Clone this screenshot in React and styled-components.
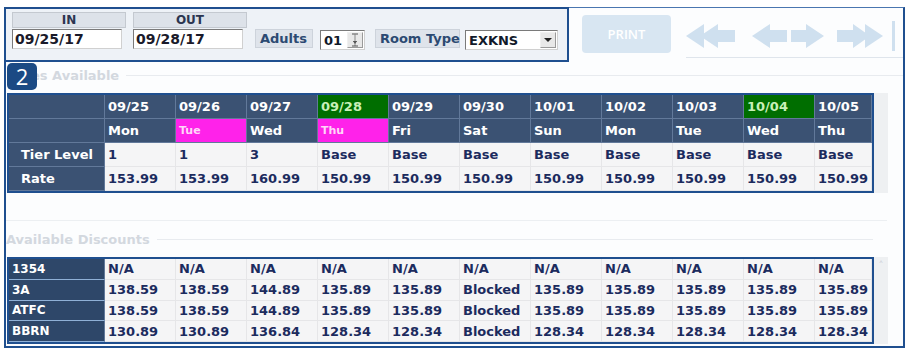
import React from 'react';
import styled, { createGlobalStyle } from 'styled-components';

const Global = createGlobalStyle`
  html, body { margin: 0; padding: 0; background: #ffffff; }
  body { font-family: "DejaVu Sans", Verdana, sans-serif; }
`;

const Page = styled.div`
  width: 907px;
  height: 350px;
  overflow: hidden;
  box-sizing: border-box;
  padding: 7px 0 0 4px;
  background: #ffffff;
`;

const Frame = styled.div`
  width: 901px;
  height: 341px;
  box-sizing: border-box;
  border: 2px solid #1f4f8f;
  border-top: 1px solid #4a76b0;
  background: #fcfdfe;
  display: flex;
  flex-direction: column;
`;

const TopRow = styled.div`
  display: flex;
  height: 54px;
`;

const SearchBox = styled.div`
  margin: -1px 0 0 -2px;
  width: 565px;
  height: 55px;
  flex: none;
  box-sizing: border-box;
  border: 2px solid #1f4f8f;
  background: #eef2f7;
  display: flex;
  align-items: flex-start;
  padding: 3px 0 0 6px;
`;

const DateField = styled.div`
  display: flex;
  flex-direction: column;
  width: 114px;
  margin-left: ${p => p.$ml || 0}px;
`;

const DateLabel = styled.div`
  height: 16px;
  box-sizing: border-box;
  border: 1px solid #c4c9d0;
  background: #dde2e9;
  text-align: center;
  font-weight: bold;
  font-size: 12px;
  line-height: 14px;
  color: #2b3550;
`;

const DateInput = styled.div`
  margin-top: 1px;
  width: 110px;
  height: 20px;
  box-sizing: border-box;
  border: 1px solid #d0d0d0;
  border-top-color: #7a7a7a;
  border-left-color: #7a7a7a;
  background: #ffffff;
  font-weight: bold;
  font-size: 14px;
  line-height: 19px;
  padding-left: 2px;
  color: #1a1a2a;
`;

const FieldLabel = styled.div`
  margin-top: 17px;
  margin-left: ${p => p.$ml}px;
  width: ${p => p.$w}px;
  height: 19px;
  box-sizing: border-box;
  border: 1px solid #cdd3db;
  background: #dfe4eb;
  font-weight: bold;
  font-size: 13px;
  line-height: 17px;
  color: #2c4a72;
  padding-left: 4px;
  white-space: nowrap;
`;

const SelectBox = styled.div`
  margin-top: 18px;
  margin-left: ${p => p.$ml}px;
  width: ${p => p.$w}px;
  height: 20px;
  box-sizing: border-box;
  border: 1px solid #d0d0d0;
  border-top-color: #7a7a7a;
  border-left-color: #7a7a7a;
  background: #ffffff;
  display: flex;
  align-items: center;
  justify-content: space-between;
  padding: 0 1px 0 3px;
  font-weight: bold;
  font-size: 13px;
  color: #111a2a;
`;

const DropButton = styled.div`
  width: 16px;
  height: 16px;
  box-sizing: border-box;
  border: 1px solid #9a9a9a;
  border-top-color: #f0f0f0;
  border-left-color: #f0f0f0;
  background: #e8e8e8;
  display: flex;
  align-items: center;
  justify-content: center;
`;

const NavArea = styled.div`
  flex: 1;
  display: flex;
  align-items: flex-start;
`;

const PrintButton = styled.div`
  margin: 7px 0 0 13px;
  width: 89px;
  height: 38px;
  flex: none;
  border-radius: 4px;
  background: #d8e6f2;
  color: #ffffff;
  font-family: "Open Sans", "Noto Sans", sans-serif;
  font-weight: 600;
  font-size: 13px;
  display: flex;
  align-items: center;
  justify-content: center;
`;

const ArrowStrip = styled.div`
  flex: 1;
  margin-left: 15px;
  height: 50px;
  box-sizing: border-box;
  border-bottom: 1px solid #dfe5ec;
  display: flex;
  align-items: flex-end;
  padding-bottom: 9px;
`;

const ArrowIcon = styled.svg`
  display: block;
  flex: none;
  margin-left: ${p => p.$ml || 0}px;
`;

const Legend = styled.div`
  position: relative;
  height: ${p => p.$h}px;
  display: flex;
  align-items: center;
  gap: 7px;
  padding-bottom: ${p => p.$pb || 0}px;
  box-sizing: border-box;
`;

const LegendText = styled.span`
  font-weight: bold;
  font-size: 13px;
  color: #d3d8df;
  white-space: nowrap;
`;

const LegendLine = styled.div`
  flex: 1;
  height: 1px;
  background: #e8ebef;
  margin-right: ${p => p.$mr || 0}px;
`;

const Badge = styled.div`
  position: absolute;
  left: 1px;
  top: 1px;
  width: 30px;
  height: 27px;
  border-radius: 5px;
  background: #1b4a84;
  color: #ffffff;
  font-family: "Open Sans", "Noto Sans", sans-serif;
  font-size: 22px;
  line-height: 27px;
  text-align: center;
`;

const TableRow = styled.div`
  display: flex;
  margin-left: 1px;
`;

const Grid = styled.div`
  display: grid;
  grid-template-columns: 96px repeat(10, 71px) 57px;
  grid-auto-rows: ${p => p.$row}px;
  border: 2px solid #1f4f8f;
  background: #f4f4f5;
`;

const Gutter = styled.div`
  width: 14px;
  background: #eef0f2;
  color: #d0d4da;
  font-size: 10px;
  text-align: center;
  line-height: 18px;
`;

const Cell = styled.div`
  box-sizing: border-box;
  display: flex;
  align-items: center;
  white-space: nowrap;
  font-weight: bold;
  font-size: ${p => (p.$small ? 11 : p.$fs || 13)}px;
  padding-left: ${p => p.$pl ?? 3}px;
  ${p =>
    p.$kind === 'head'
      ? `
    background: #3b5273;
    color: #ffffff;
    border-right: 1px solid #62799a;
    border-bottom: 1px solid #62799a;
  `
      : p.$kind === 'label'
      ? `
    background: #2e4769;
    color: #ffffff;
    border-right: 1px solid #62799a;
    border-bottom: 1px solid #8fb0d6;
  `
      : `
    background: #f5f5f6;
    color: #1c2b5e;
    border-right: 1px solid #e6e6e8;
    border-bottom: 1px solid #e6e6e8;
  `}
  ${p => p.$hl === 'green' && `background: #006e00; color: #c9f0b8;`}
  ${p => p.$hl === 'pink' && `background: #ff22ea; color: #ffd6f8;`}
`;

const Divider = styled.div`
  height: 28px;
  box-sizing: border-box;
  border-bottom: 1px solid #eceff2;
  margin-right: 16px;
`;

const dates = ['09/25', '09/26', '09/27', '09/28', '09/29', '09/30', '10/01', '10/02', '10/03', '10/04', '10/05'];
const days = ['Mon', 'Tue', 'Wed', 'Thu', 'Fri', 'Sat', 'Sun', 'Mon', 'Tue', 'Wed', 'Thu'];
const greenDates = [3, 9];
const pinkDays = [1, 3];
const tiers = ['1', '1', '3', 'Base', 'Base', 'Base', 'Base', 'Base', 'Base', 'Base', 'Base'];
const rates = ['153.99', '153.99', '160.99', '150.99', '150.99', '150.99', '150.99', '150.99', '150.99', '150.99', '150.99'];

const r3a = ['138.59', '138.59', '144.89', '135.89', '135.89', 'Blocked', '135.89', '135.89', '135.89', '135.89', '135.89'];
const discounts = [
  { code: '1354', vals: Array(11).fill('N/A') },
  { code: '3A', vals: r3a },
  { code: 'ATFC', vals: r3a },
  { code: 'BBRN', vals: ['130.89', '130.89', '136.84', '128.34', '128.34', 'Blocked', '128.34', '128.34', '128.34', '128.34', '128.34'] },
];

const ARROW = '#cfe0ef';

function DoubleLeft() {
  return (
    <ArrowIcon width="50" height="24" viewBox="0 0 50 24">
      <polygon points="0,12 18,0 18,24" fill={ARROW} />
      <polygon points="14,12 32,0 32,6 49,6 49,18 32,18 32,24" fill={ARROW} />
    </ArrowIcon>
  );
}
function LeftArrow({ ml }) {
  return (
    <ArrowIcon $ml={ml} width="36" height="24" viewBox="0 0 36 24">
      <polygon points="0,12 18,0 18,6 35,6 35,18 18,18 18,24" fill={ARROW} />
    </ArrowIcon>
  );
}
function RightArrow({ ml }) {
  return (
    <ArrowIcon $ml={ml} width="33" height="24" viewBox="0 0 33 24">
      <polygon points="0,6 15,6 15,0 33,12 15,24 15,18 0,18" fill={ARROW} />
    </ArrowIcon>
  );
}
function DoubleRight({ ml }) {
  return (
    <ArrowIcon $ml={ml} width="60" height="30" viewBox="0 0 60 30" style={{ marginBottom: -3 }}>
      <polygon points="0,9 16,9 16,3 33,15 16,27 16,21 0,21" fill={ARROW} />
      <polygon points="28,3 46,15 28,27" fill={ARROW} />
      <rect x="55" y="0" width="3" height="30" fill={ARROW} />
    </ArrowIcon>
  );
}

function SpinIcon() {
  return (
    <svg width="10" height="14" viewBox="0 0 10 14">
      <line x1="2" y1="1" x2="8" y2="1" stroke="#555" />
      <polygon points="3,8 7,8 5,11" fill="#222" />
      <line x1="5" y1="1" x2="5" y2="13" stroke="#888" />
      <line x1="2" y1="13" x2="8" y2="13" stroke="#555" />
    </svg>
  );
}
function DropIcon() {
  return (
    <svg width="8" height="5" viewBox="0 0 8 5">
      <polygon points="0,0 8,0 4,4" fill="#222" />
    </svg>
  );
}

export default function App() {
  return (
    <>
      <Global />
      <Page>
        <Frame>
          <TopRow>
            <SearchBox>
              <DateField>
                <DateLabel>IN</DateLabel>
                <DateInput>09/25/17</DateInput>
              </DateField>
              <DateField $ml={7}>
                <DateLabel>OUT</DateLabel>
                <DateInput>09/28/17</DateInput>
              </DateField>
              <FieldLabel $ml={8} $w={58}>Adults</FieldLabel>
              <SelectBox $ml={7} $w={45}>
                <span>01</span>
                <DropButton><SpinIcon /></DropButton>
              </SelectBox>
              <FieldLabel $ml={10} $w={85}>Room Type</FieldLabel>
              <SelectBox $ml={5} $w={93}>
                <span>EXKNS</span>
                <DropButton><DropIcon /></DropButton>
              </SelectBox>
            </SearchBox>
            <NavArea>
              <PrintButton>PRINT</PrintButton>
              <ArrowStrip>
                <DoubleLeft />
                <LeftArrow ml={16} />
                <RightArrow ml={3} />
                <DoubleRight ml={13} />
              </ArrowStrip>
            </NavArea>
          </TopRow>

          <Legend $h={31} $pb={5}>
            <LegendText>Rates Available</LegendText>
            <LegendLine />
            <Badge>2</Badge>
          </Legend>

          <TableRow>
            <Grid $row={24}>
              <Cell $kind="head" />
              {dates.map((d, i) => (
                <Cell key={'d' + i} $kind="head" $hl={greenDates.includes(i) ? 'green' : undefined}>{d}</Cell>
              ))}
              <Cell $kind="head" />
              {days.map((d, i) => (
                <Cell key={'w' + i} $kind="head" $hl={pinkDays.includes(i) ? 'pink' : undefined} $small={pinkDays.includes(i)}>{d}</Cell>
              ))}
              <Cell $kind="head" $pl={12}>Tier Level</Cell>
              {tiers.map((t, i) => (
                <Cell key={'t' + i}>{t}</Cell>
              ))}
              <Cell $kind="head" $pl={12}>Rate</Cell>
              {rates.map((r, i) => (
                <Cell key={'r' + i}>{r}</Cell>
              ))}
            </Grid>
            <Gutter />
          </TableRow>

          <Divider />
          <Legend $h={36} $pb={0}>
            <LegendText>Available Discounts</LegendText>
            <LegendLine $mr={30} />
          </Legend>

          <TableRow>
            <Grid $row={20.75}>
              {discounts.map(row => (
                <React.Fragment key={row.code}>
                  <Cell $kind="label" $fs={12}>{row.code}</Cell>
                  {row.vals.map((v, i) => (
                    <Cell key={row.code + i}>{v}</Cell>
                  ))}
                </React.Fragment>
              ))}
            </Grid>
            <Gutter>˄</Gutter>
          </TableRow>
        </Frame>
      </Page>
    </>
  );
}
